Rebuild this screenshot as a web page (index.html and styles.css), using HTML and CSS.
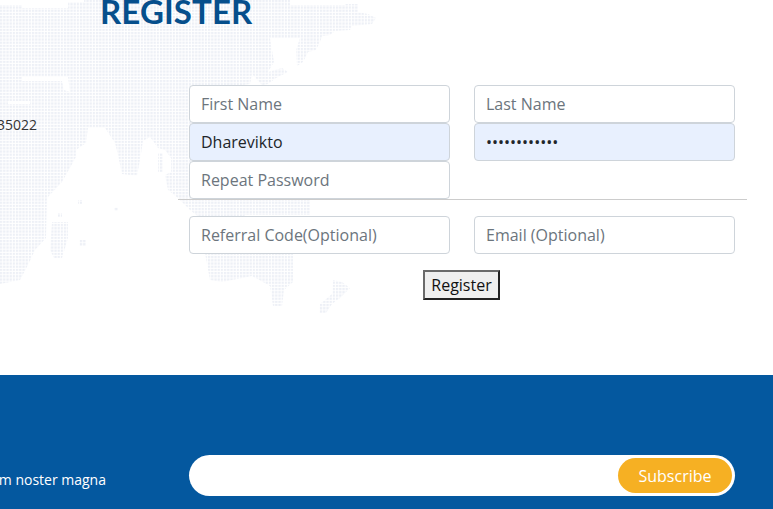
FILE: index.html

```html
<!DOCTYPE html>
<html lang="en">
<head>
  <meta charset="UTF-8">
  <meta name="viewport" content="width=device-width, initial-scale=1.0">
  <title>Register</title>
  <link rel="stylesheet" href="styles.css">
</head>
<body>

<section class="registro">
  <svg class="mapa" width="400" height="340" viewBox="0 0 400 340" aria-hidden="true">
    <defs>
      <pattern id="puntos" width="3.2" height="3.2" patternUnits="userSpaceOnUse">
        <rect width="2.2" height="2.2" fill="#edf0f6"></rect>
      </pattern>
    </defs>
    <path fill="url(#puntos)" fill-rule="evenodd" d="M0 5 L22 5 L22 8 L68 8 L68 2 L84 2 L84 0 L290 0 L290 5 L345 5 L345 4 L358 4 L358 12 L368 14 L376 18 L372 24 L352 26 L350 30 L335 31 L330 35 L322 36 L320 42 L316 50 L308 52 L303 62 L297 66 L296 50 L300 38 L270 38 L272 50 L274 62 L268 72 L282 68 L288 72 L276 78 L268 84 L262 85 L252 74 L250 84 L222 88 L200 198 L178 198 L168 190 L165 175 L171 172 L171 158 L165 150 L158 148 L150 137 L143 141 L140 160 L137 176 L122 174 L118 155 L115 143 L105 128 L88 128 L86 143 L76 150 L76 157 L62 182 L47 198 L46 238 L35 250 L28 265 L20 280 L0 284 Z
      M22 77 L68 77 L70 92 L64 90 L62 81 L22 81 Z M8 101 L30 101 L30 104 L8 104 Z"></path>
    <path fill="url(#puntos)" d="M158 153 L163 153 L163 172 L158 172 Z"></path>
    <path fill="url(#puntos)" d="M178 198 L310 198 L310 215 L245 215 L240 222 L205 222 L190 210 Z"></path>
    <path fill="url(#puntos)" d="M205 253 L293 253 L293 282 L284 290 L282 306 L273 306 L270 286 L252 276 L222 282 L210 280 Z"></path>
    <path fill="url(#puntos)" d="M333 280 L342 282 L350 288 L340 298 L332 304 L326 313 L319 313 L320 304 L332 294 Z"></path>
    <path fill="url(#puntos)" d="M52 222 L68 222 L68 238 L62 258 L54 258 L50 250 Z M78 200 L82 200 L82 204 L78 204 Z M58 213 L62 213 L62 217 L58 217 Z M114 207 L118 207 L118 211 L114 211 Z M79 240 L86 240 L86 246 L79 246 Z"></path>
  </svg>

  <h1 class="titulo">REGISTER</h1>

  <div class="cuerpo">
    <div class="contacto"><span>+91 98235022</span></div>

    <form class="formulario">
      <div class="campos">
        <input type="text" placeholder="First Name">
        <input type="text" placeholder="Last Name">
        <input class="autollenado" type="text" value="Dharevikto">
        <input class="autollenado" type="password" value="abcdefghijkl">
        <input type="password" placeholder="Repeat Password">
      </div>
      <hr class="separador">
      <div class="campos">
        <input type="text" placeholder="Referral Code(Optional)">
        <input type="email" placeholder="Email (Optional)">
      </div>
      <div class="enviar">
        <button type="button" class="boton-registro">Register</button>
      </div>
    </form>
  </div>
</section>

<footer class="pie">
  <div class="pie-texto"><span>Nostrum noster magna</span></div>
  <form class="suscribir">
    <input type="email" aria-label="Email">
    <button type="button">Subscribe</button>
  </form>
</footer>

</body>
</html>
```

FILE: styles.css

```css
* { box-sizing: border-box; }
html, body { height: 100%; }
body {
  margin: 0;
  overflow: hidden;
  background: white;
  color: #212529;
  font-family: "Open Sans", Arial, sans-serif;
}
.registro {
  position: relative;
  height: 375px;
  overflow: hidden;
}
.mapa {
  position: absolute;
  top: 0;
  left: 0;
}
.titulo {
  position: relative;
  height: 85px;
  margin: 0;
  padding-left: 100px;
  color: #064f8c;
  font-family: Lato, Arial, sans-serif;
  font-size: 33px;
  font-weight: 700;
  letter-spacing: 0.1px;
  line-height: 23px;
}
.cuerpo {
  position: relative;
  display: flex;
}
.contacto {
  display: flex;
  justify-content: flex-end;
  width: 37px;
  margin-right: 141px;
  padding-top: 30px;
  overflow: hidden;
  color: #333;
  font-size: 14px;
  line-height: 20px;
  white-space: nowrap;
}
.formulario {
  width: 569px;
}
.campos {
  display: grid;
  grid-template-columns: 261px 261px;
  column-gap: 24px;
  padding: 0 11px;
}
input {
  height: 38px;
  padding: 6px 11px;
  border: 1px solid #ced4da;
  border-radius: 4px;
  background: white;
  color: #212529;
  font-family: inherit;
  font-size: 16px;
}
input::placeholder { color: #6c757d; opacity: 1; }
.autollenado { background: #e8f0fe; }
.separador {
  height: 1px;
  margin: 0 0 16px;
  border: none;
  background: #ccc;
}
.enviar {
  display: flex;
  justify-content: center;
  margin-top: 16px;
  padding-right: 2px;
}
.boton-registro {
  width: 77px;
  height: 30px;
  padding: 0;
  border: 2px solid;
  border-color: #6a6a6a #222 #222 #6a6a6a;
  background: #efefef;
  color: #111;
  font-family: inherit;
  font-size: 16px;
}
.pie {
  display: flex;
  height: 134px;
  padding-top: 80px;
  background: #04589f;
}
.pie-texto {
  display: flex;
  justify-content: flex-end;
  width: 106px;
  height: 41px;
  margin-right: 83px;
  overflow: hidden;
  color: white;
  font-size: 14px;
  line-height: 50px;
  white-space: nowrap;
}
.suscribir {
  display: flex;
  width: 546px;
  height: 41px;
  padding: 3px;
  border-radius: 21px;
  background: white;
}
.suscribir input {
  flex: 1;
  min-width: 0;
  height: 35px;
  border: none;
  background: transparent;
}
.suscribir button {
  width: 114px;
  height: 35px;
  border: none;
  border-radius: 18px;
  background: #f6b023;
  color: white;
  font-family: inherit;
  font-size: 16px;
}
```
